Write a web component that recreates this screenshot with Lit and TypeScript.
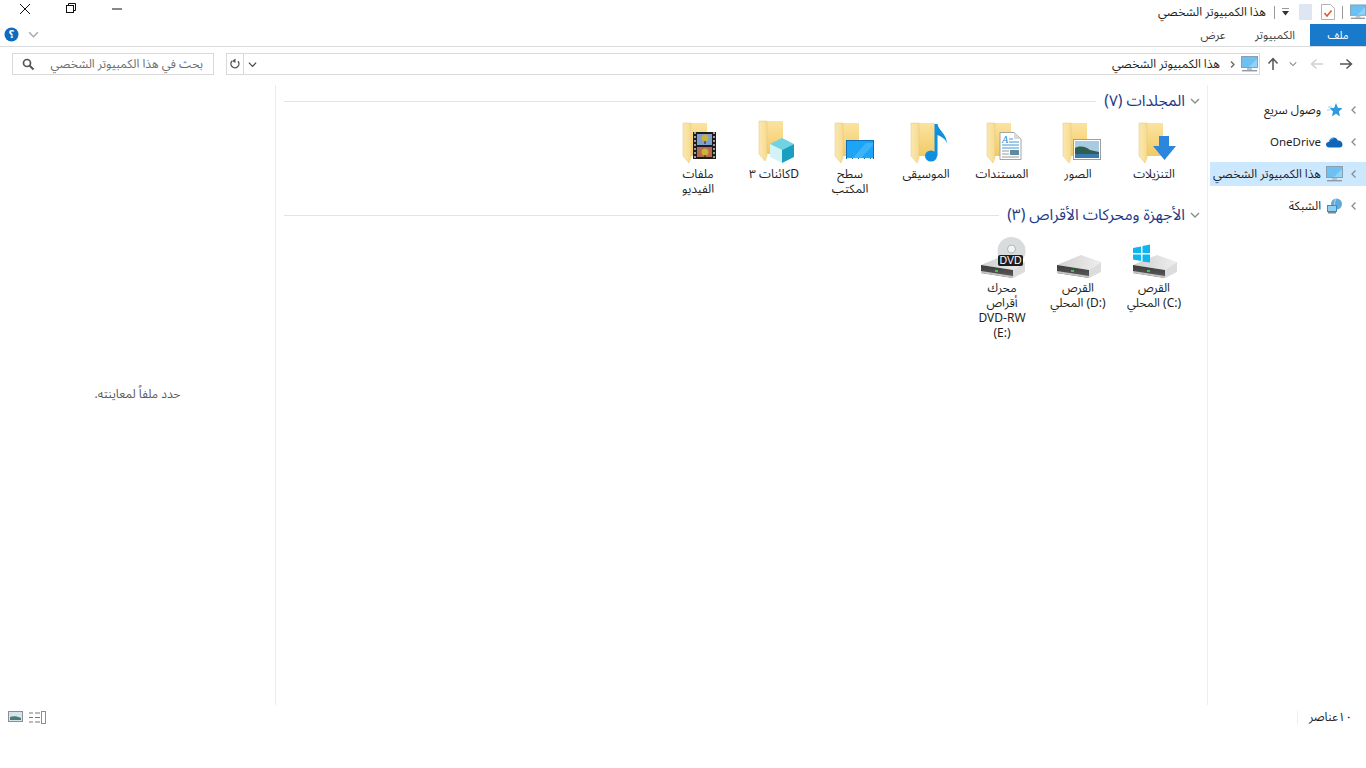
import { LitElement, html, css, svg } from "lit";
import { customElement } from "lit/decorators.js";

const chev = (d: string, c = "#8a8a8a", s = 10) => {
  const pts: Record<string, string> = { left: "6.5,1.5 3,5 6.5,8.5", down: "1,3 5,7 9,3" };
  return html`<svg width=${s} height=${s} viewBox="0 0 10 10"><polyline points=${pts[d]} fill="none" stroke=${c} stroke-width="1.3"/></svg>`;
};

const monitor = (w = 17, h = 16) => html`<svg width=${w} height=${h} viewBox="0 0 17 16">
  <rect x=".5" y=".5" width="16" height="11" fill="#3fa9ee" stroke="#8aa0b0"/>
  <rect x="1" y="1" width="15" height="10" fill="#6cc0f2"/>
  <polygon points="8,11 16,3 16,11" fill="#8fd3f7"/>
  <rect x="6" y="12" width="5" height="2" fill="#b9c3cb"/>
  <rect x="1" y="14" width="15" height="1.4" fill="#8f9aa5"/>
</svg>`;

const folderBase = svg`
  <defs>
    <linearGradient id="fb" x1="0" y1="0" x2="0" y2="1"><stop offset="0" stop-color="#fbe39f"/><stop offset="1" stop-color="#f1ca66"/></linearGradient>
    <linearGradient id="ff" x1="0" y1="0" x2="1" y2="0"><stop offset="0" stop-color="#fbe8b0"/><stop offset="1" stop-color="#f6dc90"/></linearGradient>
  </defs>
  <rect x="13" y="5" width="20" height="33" fill="url(#fb)"/>
  <polygon points="9,5 17,5 17,40 15,45 9,38" fill="url(#ff)" stroke="#e6c777" stroke-width=".5"/>`;

const folder = (overlay: unknown, dy = 0) => html`<svg class="ic" width="48" height="48" viewBox="0 0 48 48"><g transform="translate(0 ${dy})">${folderBase}</g>${overlay}</svg>`;

const overlays = {
  down: svg`<polygon points="29,16 39,16 39,26 46,26 34.500,40 23,26 29,26" fill="#2c86dd"/>`,
  pics: svg`<rect x="19.500" y="19.500" width="27" height="20" fill="#fff" stroke="#9d9d9d"/>
    <rect x="21" y="21" width="24" height="17" fill="#a9cbe2"/>
    <path d="M21 28 C27 25 32 27 36 30 L45 32 V38 H21Z" fill="#2f5f52"/>
    <rect x="21" y="34" width="24" height="4" fill="#3a7ab0"/>`,
  docs: svg`<polygon points="22,12.500 36,12.500 43,19 43,39.500 22,39.500" fill="#fff" stroke="#a3a3a3"/>
    <polygon points="36,12.500 43,19 36,19" fill="#d9d9d9"/>
    <text x="24" y="23" font-size="10" font-style="italic" font-family="Liberation Serif" fill="#2a8ad4">A</text>
    <path d="M31 19h4M31 22h10M24 25h17M24 28h17" stroke="#3c98d8" stroke-width="1"/>
    <path d="M24 31h7M24 34h7M24 37h17" stroke="#9a9a9a" stroke-width="1"/>
    <rect x="32" y="30" width="9" height="5" fill="#5d8aa0"/>`,
  music: svg`<ellipse cx="29" cy="36" rx="6" ry="5.500" fill="#0f8fe0"/>
    <path d="M32.500 36 V4 H35.500 C36 10 45 14 45 24 C44 19 40 17 35.500 15 V36Z" fill="#0f8fe0"/>`,
  desk: svg`<rect x="20" y="20" width="28" height="19" fill="#0f6db8"/>
    <rect x="21" y="21" width="26" height="17" fill="#1ea4f6"/>
    <path d="M27 38 L40 23 H47 V25 L35 38Z" fill="#3db4fa"/>
    <path d="M21 38.500h26" stroke="#e3f3fc" stroke-dasharray="5 1"/>`,
  cube: svg`<polygon points="32,18 44,24 32,30 20,24" fill="#6fd3e3"/>
    <polygon points="20,24 32,30 32,43 20,37" fill="#d4f3f6"/>
    <polygon points="32,30 44,24 44,37 32,43" fill="#1a9fc0"/>`,
  film: svg`<rect x="19" y="12" width="23" height="27" fill="#1c1c1c"/>
    <rect x="23" y="14" width="15" height="11" fill="#7f9fd0"/>
    <rect x="23" y="27" width="15" height="10" fill="#b56b4e"/>
    <circle cx="31" cy="18" r="3.500" fill="#c9b33a"/>
    <circle cx="31" cy="32" r="3.500" fill="#c9b33a"/>
    <path d="M31 21v3M31 35v2" stroke="#222" stroke-width="1"/>
    <path d="M21 12v27" stroke="#c9c9c9" stroke-width="1.500" stroke-dasharray="2 2"/>
    <path d="M40 12v27" stroke="#c9c9c9" stroke-width="1.500" stroke-dasharray="2 2"/>`,
};

const driveBody = svg`
  <defs>
    <linearGradient id="dt" x1="0" y1="0" x2="1" y2="0"><stop offset="0" stop-color="#cfcfcf"/><stop offset="1" stop-color="#eeeeee"/></linearGradient>
    <linearGradient id="df" x1="0" y1="0" x2="0" y2="1"><stop offset="0" stop-color="#3b3b3b"/><stop offset="1" stop-color="#5d5d5d"/></linearGradient>
  </defs>
  <polygon points="3,31 27,21 47,28 35,36" fill="url(#dt)"/>
  <polygon points="3,31 35,36 35,44 3,39" fill="url(#df)"/>
  <polygon points="3,37 35,42 35,44 3,39" fill="#c4c4c4"/>
  <polygon points="35,36 47,28 47,38 35,44" fill="#dcdcdc"/>
  <rect x="17" y="36" width="3" height="2" fill="#39c45a"/>`;

const drive = (overlay: unknown = "") => html`<svg class="ic" width="48" height="48" viewBox="0 0 48 48">${driveBody}${overlay}</svg>`;

const win = svg`<g fill="#10b4ee"><polygon points="3,14 11,12.500 11,19 3,19"/><polygon points="12.500,12 20,10.500 20,19 12.500,19"/><polygon points="3,20.500 11,20.500 11,27 3,25.500"/><polygon points="12.500,20.500 20,20.500 20,28.500 12.500,27.500"/></g>`;
const dvd = svg`<circle cx="33.500" cy="17" r="14" fill="#d9dcdd"/><circle cx="33.500" cy="15" r="4" fill="#f4f4f4" stroke="#b5b5b5"/>
  <rect x="20" y="21" width="25" height="11" rx="2" fill="#1d1d1d"/>
  <text x="32.500" y="30" text-anchor="middle" font-size="10.500" font-family="Liberation Sans" fill="#fff">DVD</text>`;

const folders: [unknown, unknown, number][] = [
  ["التنزيلات", overlays.down, -2],
  ["الصور", overlays.pics, -2],
  ["المستندات", overlays.docs, -2],
  ["الموسيقى", overlays.music, -2],
  [html`سطح<br />المكتب`, overlays.desk, -2],
  ["Dكائنات ٣", overlays.cube, -4],
  [html`ملفات<br />الفيديو`, overlays.film, -2],
];

@customElement("app-root")
export class AppRoot extends LitElement {
  static styles = css`
    :host { display: flex; flex-direction: column; height: 768px; width: 1366px; background: #fff; overflow: hidden;
      font: 12px/15px "Noto Sans Arabic", "Liberation Sans", "DejaVu Sans", sans-serif; color: #1e1e1e; }
    svg { display: block; flex: none; }
    .title { height: 24px; display: flex; align-items: flex-start; justify-content: space-between; }
    .caption { display: flex; margin-left: 2px; }
    .caption button { width: 46px; height: 18px; padding: 0; border: 0; background: none; display: flex; align-items: center; justify-content: center; }
    .qat { display: flex; flex-direction: row-reverse; align-items: center; height: 24px; }
    .sep { width: 1px; height: 13px; background: #9a9a9a; }
    .qat .t { margin-right: 1px; }
    .ribbon { height: 22px; border-bottom: 1px solid #dadbdc; display: flex; align-items: stretch; justify-content: space-between; }
    .help { display: flex; align-items: center; gap: 9px; padding: 0 0 2px 4px; }
    .tabs { display: flex; flex-direction: row-reverse; }
    .tab { display: flex; align-items: center; justify-content: center; font-size: 11.5px; color: #444; }
    .tab.file { width: 56px; background: #1979ca; color: #fff; font-size: 11px; }
    .tab.wide { width: 70px; }
    .tab.narrow { width: 54px; }
    .addr { margin-top: 6px; height: 22px; display: flex; align-items: stretch; padding-left: 12px; }
    .box { border: 1px solid #d9d9d9; display: flex; align-items: center; box-sizing: border-box; }
    .search { width: 202px; padding: 0 10px 0 9px; justify-content: space-between; color: #6d6d6d; }
    .path { flex: 1; margin-left: 12px; }
    .path .ref { width: 16px; height: 100%; border-right: 1px solid #d9d9d9; display: flex; align-items: center; justify-content: center; }
    .path .dd { width: 16px; display: flex; justify-content: center; }
    .crumbs { flex: 1; display: flex; flex-direction: row-reverse; align-items: center; padding-right: 1px; }
    .crumbs .t { margin: 0 9px 0 8px; }
    .navs { width: 106px; display: flex; flex-direction: row-reverse; align-items: center; flex: none; }
    .main { margin-top: 10px; height: 620px; display: flex; }
    .preview { width: 275px; border-right: 1px solid #ececec; display: flex; align-items: center; justify-content: center; color: #5a5a5a; padding-bottom: 2px; box-sizing: border-box; flex: none; width: 276px; }
    .content { flex: 1; padding: 7px 7px 0 8px; }
    .tree { width: 156px; border-left: 1px solid #eeeeee; padding: 13px 0 0 2px; display: flex; flex-direction: column; gap: 8px; }
    .node { height: 24px; display: flex; flex-direction: row-reverse; align-items: center; padding-right: 7px; }
    .node.sel { background: #cce8ff; }
    .node .lab { margin-right: 5px; white-space: nowrap; }
    .node .lab.lat { font-size: 11.500px; }
    .node .nic { margin-right: 6px; width: 17px; display: flex; justify-content: center; }
    .gh { height: 18px; display: flex; flex-direction: row-reverse; align-items: center; color: #1d3a86; font-size: 15.500px; }
    .gh .gt { margin: 0 5px 0 8px; white-space: nowrap; }
    .gh .ln { flex: 1; height: 1px; background: #e3e3e3; }
    .grid { display: flex; flex-direction: row-reverse; padding: 10px 8px 0 0; }
    .grid.first { height: 86px; box-sizing: border-box; height: 96px; }
    .item { width: 76px; display: flex; flex-direction: column; align-items: center; }
    .item .ic { margin-bottom: -1px; }
    .lbl { width: 66px; text-align: center; }
    .status { height: 25px; display: flex; align-items: center; justify-content: space-between; padding: 0 14px 0 8px; }
    .views { display: flex; gap: 6px; }
    .count { display: flex; flex-direction: row-reverse; align-items: center; word-spacing: -3px; }
    .count .sp { width: 1px; height: 13px; background: #eeeeee; margin-right: 11px; }
  `;

  render() {
    const tree = [
      ["وصول سريع", html`<svg width="16" height="16" viewBox="0 0 16 16"><path d="M9 1l1.800 4.700 4.700.5-3.600 3.300 1.100 5L9 11.800 4.900 14.500l1.100-5L2.500 6.200l4.700-.5z" fill="#2f9bdc"/><path d="M1 5h4M0 8h3" stroke="#9cd0ee"/></svg>`, false],
      ["OneDrive", html`<svg width="17" height="12" viewBox="0 0 17 12"><path d="M3.500 11.500C1 11.500 0 10 0 8.600 0 7 1.200 6 2.600 6 3.400 3 5.400 1.500 7.500 1.500c2 0 3.600 1 4.300 3 2.800-.3 4.700 1.700 4.700 4 0 1.700-1 3-3 3z" fill="#0f66b8"/><path d="M3 6c1-2.500 2.500-3.500 4.500-3.500" fill="none" stroke="#5fb3ea"/></svg>`, false],
      ["هذا الكمبيوتر الشخصي", monitor(), true],
      ["الشبكة", html`<svg width="17" height="16" viewBox="0 0 17 16"><circle cx="10.500" cy="6" r="5.500" fill="#62a8d8"/><path d="M10 1c-2 3-2 6 0 10" fill="none" stroke="#bfe0f2"/><rect x="1" y="7" width="10" height="7" fill="#2f8fcb"/><rect x="2" y="8" width="8" height="5" fill="#8fd0f0"/><rect x="2" y="14" width="8" height="1.500" fill="#7d8a94"/></svg>`, false],
    ] as const;
    return html`
      <div class="title">
        <div class="caption">
          <button aria-label="close"><svg width="14" height="14" viewBox="0 0 14 14"><path d="M2 2l10 10M12 2L2 12" stroke="#111" stroke-width="1"/></svg></button>
          <button aria-label="restore"><svg width="12" height="12" viewBox="0 0 12 12"><path d="M3.500 2.500V.5h7v7h-2" fill="none" stroke="#111"/><rect x="1.500" y="2.500" width="7" height="7" fill="#fff" stroke="#111"/></svg></button>
          <button aria-label="minimize"><svg width="12" height="12" viewBox="0 0 12 12"><path d="M1 6h10" stroke="#111"/></svg></button>
        </div>
        <div class="qat">
          ${monitor(16, 16)}
          <span class="sep" style="margin:0 7px"></span>
          <svg width="14" height="16" viewBox="0 0 14 16"><path d="M.5.5h9l4 4v11H.5z" fill="#fff" stroke="#b5b5b5"/><path d="M3.500 9l2.500 3 4.500-5.500" fill="none" stroke="#e0562b" stroke-width="1.500"/></svg>
          <span style="width:9px"></span>
          <svg width="13" height="16" viewBox="0 0 13 16"><rect width="13" height="16" fill="#dfe6f3"/></svg>
          <span style="width:9px"></span>
          <svg width="9" height="9" viewBox="0 0 9 9"><path d="M1 0h7" stroke="#333"/><polygon points="1,3 8,3 4.500,7.500" fill="#333"/></svg>
          <span class="sep" style="margin:0 6px 0 7px"></span>
          <span class="t" dir="rtl">هذا الكمبيوتر الشخصي</span>
        </div>
      </div>
      <div class="ribbon">
        <div class="help">
          <svg width="15" height="15" viewBox="0 0 15 15"><circle cx="7.500" cy="7.500" r="7" fill="#0f6cbd"/><text x="7.500" y="11" font-size="10" font-weight="700" text-anchor="middle" fill="#fff" font-family="DejaVu Sans">؟</text></svg>
          ${chev("down", "#a8a8a8", 11)}
        </div>
        <div class="tabs">
          <div class="tab file">ملف</div>
          <div class="tab wide">الكمبيوتر</div>
          <div class="tab narrow">عرض</div>
        </div>
      </div>
      <div class="addr">
        <div class="box search">
          <svg width="13" height="13" viewBox="0 0 13 13"><circle cx="5" cy="5" r="3.500" fill="none" stroke="#555" stroke-width="1.700"/><path d="M7.500 7.500l4 4" stroke="#555" stroke-width="2"/></svg>
          <span dir="rtl">بحث في هذا الكمبيوتر الشخصي</span>
        </div>
        <div class="box path">
          <div class="ref"><svg width="12" height="12" viewBox="0 0 12 12"><path d="M3 3a4 4 0 1 0 6 0.200" fill="none" stroke="#555" stroke-width="1.400"/><path d="M6.500 .5v4.500L3 3z" fill="#555"/></svg></div>
          <div class="dd">${chev("down", "#444", 9)}</div>
          <div class="crumbs">
            ${monitor()}
            <span style="width:5px"></span>
            <svg width="7" height="9" viewBox="0 0 7 9"><polyline points="2,1.500 5,4.500 2,7.500" fill="none" stroke="#666" stroke-width="1.300"/></svg>
            <span class="t" dir="rtl">هذا الكمبيوتر الشخصي</span>
          </div>
        </div>
        <div class="navs">
          <span style="width:13px"></span>
          <svg width="14" height="12" viewBox="0 0 14 12"><path d="M1 6h11M7.500 1.500L12.500 6l-5 4.500" fill="none" stroke="#555" stroke-width="1.500"/></svg>
          <span style="width:15px"></span>
          <svg width="14" height="12" viewBox="0 0 14 12"><path d="M13 6H2M6.500 1.500L1.500 6l5 4.500" fill="none" stroke="#d2d2d2" stroke-width="1.500"/></svg>
          <span style="width:13px"></span>
          ${chev("down", "#888", 8)}
          <span style="width:10px"></span>
          <svg width="12" height="14" viewBox="0 0 12 14"><path d="M6 13V2M1.500 6.500L6 1.500l4.500 5" fill="none" stroke="#555" stroke-width="1.500"/></svg>
        </div>
      </div>
      <div class="main">
        <div class="preview"><span dir="rtl">حدد ملفاً لمعاينته.</span></div>
        <div class="content">
          <div class="gh">${chev("down", "#8a8a8a", 10)}<span class="gt" dir="rtl">المجلدات (٧)</span><span class="ln"></span></div>
          <div class="grid first">
            ${folders.map(([n, o, dy]) => html`<div class="item">${folder(o, dy)}<div class="lbl" dir="rtl">${n}</div></div>`)}
          </div>
          <div class="gh">${chev("down", "#8a8a8a", 10)}<span class="gt" dir="rtl">الأجهزة ومحركات الأقراص (٣)</span><span class="ln"></span></div>
          <div class="grid">
            <div class="item">${drive(win)}<div class="lbl" dir="rtl">القرص<br />(C:\u200E) المحلي</div></div>
            <div class="item">${drive()}<div class="lbl" dir="rtl">القرص<br />(D:\u200E) المحلي</div></div>
            <div class="item">${drive(dvd)}<div class="lbl" dir="rtl">محرك<br />أقراص<br />DVD-RW<br />(E:\u200E)</div></div>
          </div>
        </div>
        <div class="tree">
          ${tree.map(([n, i, s]) => html`<div class="node ${s ? "sel" : ""}">${chev("left", "#8a8a8a", 10)}<span class="nic">${i}</span><span class="lab ${n === "OneDrive" ? "lat" : ""}" dir="rtl">${n}</span></div>`)}
        </div>
      </div>
      <div class="status">
        <div class="views">
          <svg width="15" height="11" viewBox="0 0 15 11"><rect x=".5" y=".5" width="14" height="10" fill="#d5e5ee" stroke="#8e8e8e"/><path d="M2 6c3-1.500 7-1 11 1v2H2z" fill="#4d7a78"/></svg>
          <svg width="17" height="13" viewBox="0 0 17 13"><path d="M0 2h4M6 2h5M0 6.500h4M6 6.500h5M0 11h4M6 11h5" stroke="#777"/><rect x="12.500" y=".5" width="4" height="12" fill="#fff" stroke="#8e8e8e"/></svg>
        </div>
        <div class="count"><span dir="rtl">١٠ عناصر</span><span class="sp"></span></div>
      </div>
    `;
  }
}
